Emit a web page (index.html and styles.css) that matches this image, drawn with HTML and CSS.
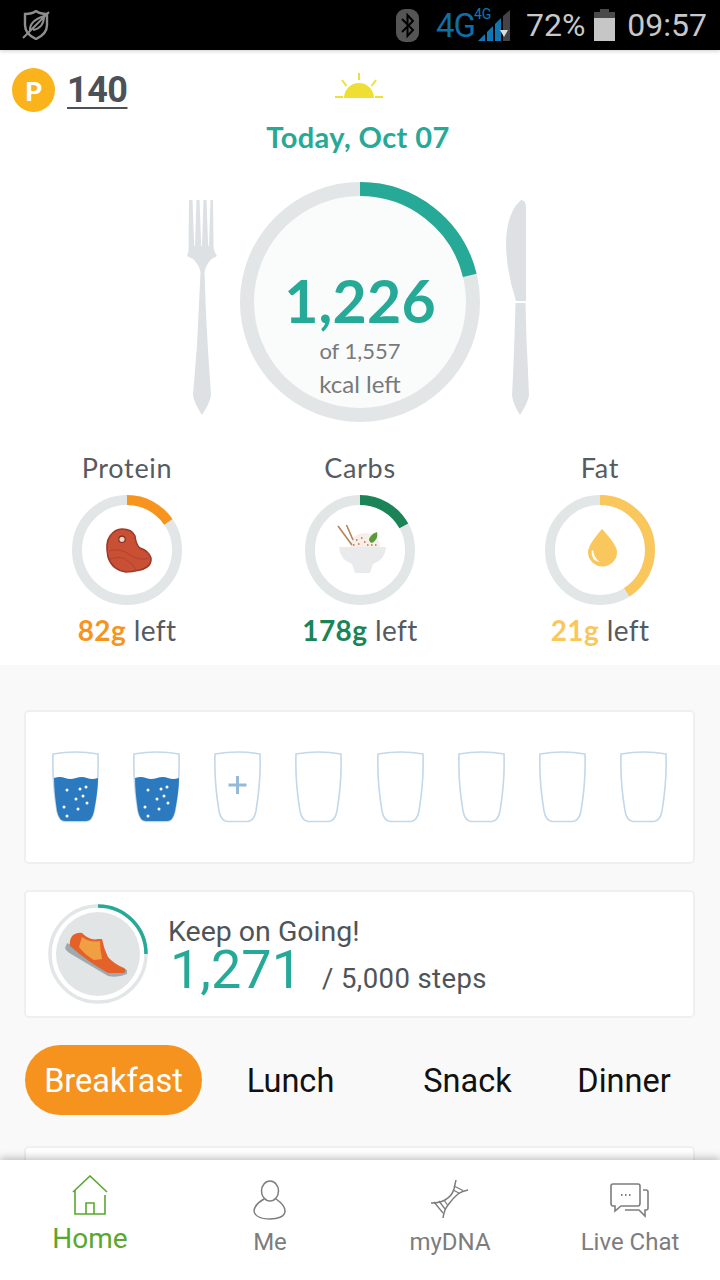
FILE: index.html
```html
<!DOCTYPE html>
<html lang="en">

<head>
  <meta charset="UTF-8" />
  <title>Home</title>
  <meta name="viewport" content="width=device-width, initial-scale=1.0" />
  <link rel="stylesheet" href="styles.css">
</head>

<body>
  <div class="status-bar">
    <svg class="shield" viewBox="0 0 28 30" width="28" height="30">
      <path d="M3 4 Q10 4 14 1 Q18 4 25 4 V15 Q25 24 14 29 Q3 24 3 15 Z" fill="none" stroke="#8e8e8e" stroke-width="2.400" />
      <path d="M8 21 Q7 11 22 6 Q22 18 11 20 M1 28 L27 2" fill="none" stroke="#8e8e8e" stroke-width="2" />
    </svg>
    <div class="status-right">
      <div class="bt-pill">
        <svg viewBox="0 0 23 33" width="23" height="33">
          <path d="M6 10 L17 21 L11.500 27 V6 L17 12 L6 23" fill="none" stroke="#000" stroke-width="2" />
        </svg>
      </div>
      <div class="network">
        <span class="net-big">4G</span>
        <span class="net-small">4G</span>
        <svg class="signal" viewBox="0 0 32 31" width="32" height="31">
          <polygon points="0,31 7,24 7,31" fill="#0f77b3" />
          <polygon points="9,22 15,16 15,31 9,31" fill="#0f77b3" />
          <polygon points="17,14 23,8 23,31 17,31" fill="#0f77b3" />
          <polygon points="25,6 32,0 32,31 25,31" fill="#444" />
          <polygon points="22,20 30,20 26,27" fill="#ddd" />
        </svg>
      </div>
      <span class="status-text pct">72%</span>
      <svg class="battery" viewBox="0 0 21 32" width="21" height="32">
        <path d="M6 0 H15 V3 H21 V9 H0 V3 H6 Z" fill="#4a4a4a" />
        <rect x="0" y="9" width="21" height="23" fill="#c6c6c6" />
      </svg>
      <span class="status-text clock">09:57</span>
    </div>
  </div>

  <div class="summary">
    <div class="top-row">
      <div class="points">
        <div class="coin">P</div>
        <span class="points-num">140</span>
      </div>
      <svg class="sun" viewBox="0 0 50 28" width="50" height="28">
        <path d="M9 26 A15 15 0 0 1 39 26 Z" fill="#f0df33" />
        <path d="M0 25 H8 M40 25 H48 M24 1 V8 M7 8 L11.500 14 M41 8 L36.500 14" stroke="#f0df33" stroke-width="2" fill="none" />
      </svg>
      <div></div>
    </div>

    <div class="date">Today, Oct 07</div>

    <div class="plate-row">
      <svg class="fork" viewBox="0 0 30 215" width="30" height="215">
        <path d="M2 0 H5.500 L7.200 46 H8 L9.500 0 H12.500 L14.200 46 H15 L16.500 0 H19.500 L21.200 46 H22 L23.500 0 H26 L26.500 47 Q27 52 30 56 Q20 60 17.500 72 Q18.500 110 21 150 Q23 180 24 195 Q23 203 15 215 Q7 203 6 195 Q8 170 10 145 Q12 105 13.500 72 Q11 60 0 56 Q2 52 1.500 47 Z" fill="#dde1e3" />
      </svg>
      <div class="plate">
        <svg class="plate-ring" viewBox="0 0 240 240" width="240" height="240">
          <circle cx="120" cy="120" r="113" fill="#fafbfb" stroke="#e3e6e7" stroke-width="14" />
          <circle cx="120" cy="120" r="113" fill="none" stroke="#26a997" stroke-width="14" pathLength="100" stroke-dasharray="21.200 100" transform="rotate(-90 120 120)" />
        </svg>
        <div class="kcal">1,226</div>
        <div class="kcal-of">of 1,557</div>
        <div class="kcal-left">kcal left</div>
      </div>
      <svg class="knife" viewBox="0 0 23 215" width="23" height="215">
        <path d="M15 0 Q20 0 20 8 V101 H10 Q0 70 0 42 Q1 12 15 0 Z" fill="#dde1e3" />
        <path d="M9.500 103 H19.500 L20.500 140 Q22 170 23 195 Q22 203 14 215 Q7 204 6 195 Q8 160 9.500 103 Z" fill="#dde1e3" />
      </svg>
    </div>

    <div class="macros">
      <div class="macro">
        <div class="macro-name">Protein</div>
        <div class="macro-ring">
          <svg viewBox="0 0 110 110" width="110" height="110">
            <circle cx="55" cy="55" r="50" fill="none" stroke="#e3e6e7" stroke-width="10" />
            <circle cx="55" cy="55" r="50" fill="none" stroke="#f7941e" stroke-width="10" pathLength="100" stroke-dasharray="15.500 100" transform="rotate(-90 55 55)" />
            <path d="M50 34 Q60 34 63 41 Q64 50 68 53 Q77 56 79 63 Q80 72 68 75 Q60 77 54 77 Q40 75 36 62 Q33 48 38 41 Q43 34 50 34 Z" fill="#c94f35" stroke="#9c3a28" stroke-width="1.500" />
            <path d="M37 56 Q48 52 60 61 Q68 66 77 63 M38 64 Q50 60 56 66 Q62 70 64 75" fill="none" stroke="#a8412c" stroke-width="0.800" />
            <circle cx="50" cy="44.300" r="3.200" fill="#f3d3c4" stroke="#7b2f20" stroke-width="1.200" />
          </svg>
        </div>
        <div class="macro-left"><b class="protein">82g</b> left</div>
      </div>

      <div class="macro macro-mid">
        <div class="macro-name">Carbs</div>
        <div class="macro-ring">
          <svg viewBox="0 0 110 110" width="110" height="110">
            <circle cx="55" cy="55" r="50" fill="none" stroke="#e3e6e7" stroke-width="10" />
            <circle cx="55" cy="55" r="50" fill="none" stroke="#1a8456" stroke-width="10" pathLength="100" stroke-dasharray="17 100" transform="rotate(-90 55 55)" />
            <path d="M45 53 Q45 39 60 38 Q75 39 75 53 Z" fill="#f6efe8" />
            <path d="M33 31 L47 50 M41.500 30 L48 45" stroke="#b5835a" stroke-width="1.600" fill="none" />
            <path d="M64 44 Q66 39 72 37 Q74 44 67 48 Q64 47 64 44 Z" fill="#5a9a3a" />
            <path d="M51 45 h1.500 M56 43 h1.500 M53 49 h1.500 M59 47 h1.500 M62 50 h1.500 M66 50 h1.500 M48 50 h1.500 M70 50 h1.500" stroke="#d0605a" stroke-width="1.500" fill="none" />
            <path d="M34 52 H81 Q80 65 68 69 L65 78 H50 L47 69 Q35 65 34 52 Z" fill="#e8eaeb" />
          </svg>
        </div>
        <div class="macro-left"><b class="carbs">178g</b> left</div>
      </div>

      <div class="macro">
        <div class="macro-name">Fat</div>
        <div class="macro-ring">
          <svg viewBox="0 0 110 110" width="110" height="110">
            <circle cx="55" cy="55" r="50" fill="none" stroke="#e3e6e7" stroke-width="10" />
            <circle cx="55" cy="55" r="50" fill="none" stroke="#f9c75c" stroke-width="10" pathLength="100" stroke-dasharray="41 100" transform="rotate(-90 55 55)" />
            <path d="M57 34 Q72 50 72 57 A14.500 14.500 0 0 1 43 57 Q43 50 57 34 Z" fill="#f9c75c" />
            <path d="M46.500 56 Q46 66 55 67 Q49 63 48 55 Z" fill="#fff" />
          </svg>
        </div>
        <div class="macro-left"><b class="fat">21g</b> left</div>
      </div>
    </div>
  </div>

  <div class="content">
    <div class="card water-card" id="glasses"></div>

    <div class="card steps-card">
      <svg class="steps-ring" viewBox="0 0 100 100" width="100" height="100">
        <circle cx="50" cy="50" r="48" fill="none" stroke="#e3e6e7" stroke-width="3.500" />
        <circle cx="50" cy="50" r="48" fill="none" stroke="#26a997" stroke-width="3.500" pathLength="100" stroke-dasharray="25 100" transform="rotate(-90 50 50)" />
        <circle cx="50" cy="50" r="42" fill="#e2e5e6" />
        <path d="M19 39 L17 44 Q18 47 23 50 L60 72 Q70 74 79 70 L79 66 Z" fill="#9eaab2" />
        <path d="M22 42 Q21 35 25 31 Q30 28 34 29 Q42 37 50 35 L54 35 Q56 45 60 53 Q66 60 76 64 Q79 66 76 69 L60 69 Q40 58 22 42 Z" fill="#e4622a" />
        <path d="M34 33 Q42 39 52 37 Q52 46 54 55 L46 56 Q36 50 31 43 Z" fill="#f0a043" />
      </svg>
      <div class="steps-text">
        <div class="steps-title">Keep on Going!</div>
        <div class="steps-line">
          <span class="steps-num">1,271</span>
          <span class="steps-goal">/ 5,000 steps</span>
        </div>
      </div>
    </div>

    <div class="tabs">
      <div class="tab active">Breakfast</div>
      <div class="tab">Lunch</div>
      <div class="tab">Snack</div>
      <div class="tab">Dinner</div>
    </div>

    <div class="card meal-card"></div>
  </div>

  <nav class="bottom-nav">
    <div class="nav-item home">
      <svg viewBox="0 0 36 40" width="36" height="40">
        <path d="M1 17 L18 1 L35 17 M3 15 V39 H33 V20 M14 39 V28 H22 V39" fill="none" stroke="#5aa72e" stroke-width="1.600" />
      </svg>
      <span>Home</span>
    </div>
    <div class="nav-item">
      <svg viewBox="0 0 34 40" width="34" height="40">
        <ellipse cx="17" cy="11" rx="8.500" ry="10" fill="none" stroke="#7d7d7d" stroke-width="1.500" />
        <path d="M11 19 Q1 25 1 31 C2 37 10 39 17 39 C24 39 32 37 32 31 Q32 25 23 19" fill="none" stroke="#7d7d7d" stroke-width="1.500" />
      </svg>
      <span>Me</span>
    </div>
    <div class="nav-item">
      <svg viewBox="0 0 40 40" width="40" height="40">
        <path d="M1 23 Q10 23 15 20 Q22 16 24 9 Q25 4 26 0 M13 38 Q14 30 18 25 Q23 18 28 14 Q32 11 38 10" fill="none" stroke="#7d7d7d" stroke-width="1.500" />
        <path d="M4 22 L13 33 M9 21 L15 29 M14 20 L17.500 25 M24 6 L33 10.500 M23 10 L29 13" fill="none" stroke="#7d7d7d" stroke-width="1.300" />
      </svg>
      <span>myDNA</span>
    </div>
    <div class="nav-item">
      <svg viewBox="0 0 40 34" width="40" height="34">
        <path d="M3 1 H28 Q30 1 30 3 V20 Q30 23 28 23 H11 L5 28 V23 H3 Q1 23 1 20 V3 Q1 1 3 1 Z" fill="none" stroke="#7d7d7d" stroke-width="1.600" />
        <path d="M33 7 H36 Q38 7 38 9 V25 Q38 27 36 27 H35 V33 L29 27 H15" fill="none" stroke="#7d7d7d" stroke-width="1.600" />
        <path d="M11 12 h1.500 M15 12 h1.500 M19 12 h1.500" stroke="#7d7d7d" stroke-width="1.800" fill="none" />
      </svg>
      <span>Live Chat</span>
    </div>
  </nav>

  <script>
    const glasses = document.getElementById('glasses');
    const dots = [[15, 39], [28, 38], [34, 36], [24, 48], [31, 45], [35, 52], [12, 56], [26, 58], [15, 65]];
    const outline = 'M1 3 Q24 -1 46 3 Q47 30 42 60 Q40 70 34 70.500 H13 Q7 70 5 60 Q0 30 1 3 Z';

    function glass(state) {
      let inner = '';
      if (state === 'full') {
        inner = `<path d="M2 27 Q8 25 13 27 T24 27 T35 27 T46 27 Q46 40 42 60 Q40 70 34 70 H13 Q7 70 5 60 Q2 40 2 27 Z" fill="#2b79be" />`;
        inner += dots.map(d => `<circle cx="${d[0]}" cy="${d[1]}" r="1.500" fill="#fff" />`).join('');
      }
      if (state === 'add') {
        inner = `<path d="M23.500 25 V43 M14.500 34 H32.500" stroke="#94b9da" stroke-width="3" fill="none" />`;
      }
      return `<svg viewBox="0 0 47 72" width="47" height="72"><path d="${outline}" fill="none" stroke="#c3d8e8" stroke-width="1.600" />${inner}</svg>`;
    }

    ['full', 'full', 'add', '', '', '', '', ''].forEach(state => {
      glasses.innerHTML += glass(state);
    });
  </script>
</body>

</html>
```
FILE: styles.css
```css
html,
body {
  height: 1280px;
  overflow: hidden;
}

body {
  margin: 0;
  position: relative;
  font-family: Roboto, sans-serif;
  background: #f9f9f9;
}

svg {
  display: block;
}

.status-bar {
  position: relative;
  height: 50px;
  background: #000;
  display: flex;
  align-items: center;
  justify-content: space-between;
  padding: 0 13px 0 22px;
  box-shadow: 0 1px 4px rgba(0, 0, 0, 0.2);
}

.status-right {
  display: flex;
  align-items: center;
}

.bt-pill {
  width: 23px;
  height: 33px;
  background: #555;
  border-radius: 9px;
  margin-right: 15px;
}

.network {
  position: relative;
  display: flex;
  align-items: center;
  margin-right: 16px;
  margin-left: 2px;
}

.net-big {
  font-size: 33px;
  letter-spacing: -1px;
  color: #0f6ea8;
  width: 42px;
}

.net-small {
  position: absolute;
  left: 38px;
  top: 0;
  font-size: 14px;
  color: #0f77b3;
}

.status-text {
  font-size: 32px;
  color: #c8c8c8;
}

.battery {
  margin: 0 12px 0 9px;
}

.summary {
  background: #fff;
  height: 615px;
  padding-top: 18px;
  box-sizing: border-box;
}

.top-row {
  display: grid;
  grid-template-columns: 1fr auto 1fr;
  height: 44px;
}

.points {
  display: flex;
  align-items: center;
  padding-left: 12px;
}

.coin {
  width: 43px;
  height: 44px;
  border-radius: 50%;
  background: #fbb31b;
  color: #fff;
  font: 900 27px Lato, sans-serif;
  display: flex;
  align-items: center;
  justify-content: center;
  margin-right: 12px;
}

.points-num {
  font-size: 36px;
  font-weight: bold;
  color: #4b5157;
  letter-spacing: -0.5px;
  text-decoration: underline;
  text-underline-offset: 5px;
  text-decoration-thickness: 2px;
}

.sun {
  margin-top: 4px;
}

.date {
  margin-top: 9px;
  margin-right: 4px;
  text-align: center;
  font: bold 29px/32px Lato, sans-serif;
  letter-spacing: 0.4px;
  color: #26a997;
}

.plate-row {
  display: flex;
  margin-top: 29px;
  padding-left: 187px;
}

.fork {
  margin: 18px 23px 0 0;
}

.knife {
  margin: 18px 0 0 26px;
}

.plate {
  position: relative;
  width: 240px;
  height: 240px;
  display: flex;
  flex-direction: column;
  align-items: center;
  font-family: Lato, sans-serif;
}

.plate-ring {
  position: absolute;
  left: 0;
  top: 0;
}

.kcal {
  position: relative;
  margin-top: 85px;
  font-size: 59px;
  line-height: 67px;
  font-weight: bold;
  color: #26a997;
  letter-spacing: 0.2px;
}

.kcal-of {
  position: relative;
  font-size: 22px;
  line-height: 33px;
  color: #77797b;
}

.kcal-left {
  position: relative;
  font-size: 24px;
  line-height: 33px;
  color: #77797b;
}

.macros {
  display: flex;
  margin-top: 30px;
  padding-left: 72px;
  font-family: Lato, sans-serif;
  color: #555b60;
}

.macro {
  width: 110px;
  display: flex;
  flex-direction: column;
  align-items: center;
  white-space: nowrap;
}

.macro-mid {
  margin: 0 130px 0 123px;
}

.macro-name {
  font-size: 27px;
  line-height: 32px;
  letter-spacing: 0.7px;
}

.macro-ring {
  margin: 11px 0 9px;
}

.macro-left {
  font-size: 28px;
  line-height: 32px;
  letter-spacing: 0.4px;
}

.protein {
  color: #f7941e;
}

.carbs {
  color: #1a8456;
}

.fat {
  color: #f9c75c;
}

.content {
  padding: 45px 25px 0 24px;
}

.card {
  background: #fff;
  border: 2px solid #eef0f0;
  border-radius: 5px;
  box-sizing: border-box;
}

.water-card {
  height: 154px;
  display: flex;
  align-items: center;
  justify-content: space-between;
  padding: 0 26px;
}

.steps-card {
  height: 128px;
  margin-top: 26px;
  display: flex;
  align-items: center;
  padding-left: 22px;
}

.steps-text {
  margin: 2px 0 0 20px;
  color: #4f5459;
}

.steps-title {
  font-size: 28.500px;
  line-height: 32px;
}

.steps-line {
  display: flex;
  align-items: baseline;
  margin-left: 2px;
}

.steps-num {
  font-size: 54px;
  line-height: 44px;
  color: #26a997;
  margin-right: 20px;
}

.steps-goal {
  font-size: 27.500px;
  letter-spacing: 0.4px;
}

.tabs {
  display: flex;
  margin-top: 27px;
  padding-left: 1px;
}

.tab {
  width: 177px;
  height: 70px;
  box-sizing: border-box;
  padding-top: 2px;
  display: flex;
  align-items: center;
  justify-content: center;
  font-size: 32.500px;
  color: #111;
  border-radius: 35px;
}

.tab:last-child {
  width: 136px;
}

.tab.active {
  background: #f6931f;
  color: #fff;
}

.meal-card {
  height: 100px;
  margin-top: 31px;
}

.bottom-nav {
  position: absolute;
  left: 0;
  right: 0;
  bottom: 0;
  height: 120px;
  background: #fff;
  box-shadow: 0 -2px 8px rgba(0, 0, 0, 0.25);
  display: grid;
  grid-template-columns: repeat(4, 180px);
}

.nav-item {
  display: flex;
  flex-direction: column;
  align-items: center;
  padding-top: 20px;
  font-size: 24px;
  color: #7d7d7d;
}

.nav-item svg {
  height: 40px;
}

.nav-item span {
  margin-top: 8px;
}

.nav-item.home {
  padding-top: 15px;
  font-size: 28px;
  color: #5aa72e;
}

.nav-item.home span {
  margin-top: 7px;
}
```
